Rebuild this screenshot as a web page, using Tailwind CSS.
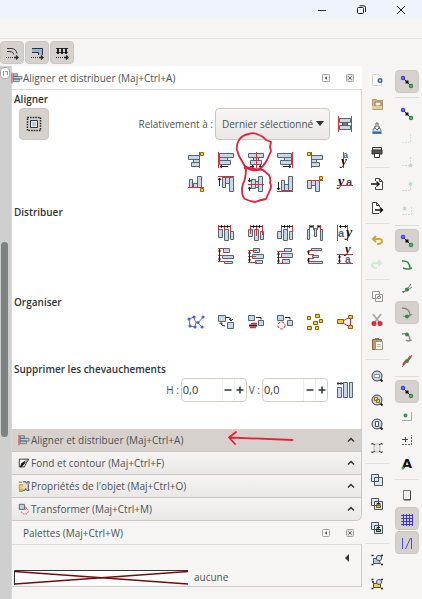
<!DOCTYPE html>
<html lang="fr">
<head>
    <meta charset="UTF-8">
    <meta name="viewport" content="width=device-width, initial-scale=1.0">
    <title>Aligner et distribuer</title>
    <script src="https://cdn.jsdelivr.net/npm/@tailwindcss/browser@4"></script>
</head>
<body class="relative min-h-screen flex flex-col overflow-hidden bg-[#f6f5f3] text-[#4c5357] text-[10px] leading-4 font-['Open_Sans','Noto_Sans',sans-serif]">

    <!-- Shared icons -->
    <svg class="hidden">
        <symbol id="align-left" viewBox="0 0 18 18">
            <path d="M1.500 1v16" stroke="#e02b35" stroke-width="1.500"/>
            <path d="M3.500 2.500h6v4h-6zM3.500 6.500h13v4h-13zM3.500 10.500h9v4h-9z"/>
        </symbol>
        <symbol id="snap" viewBox="0 0 18 18">
            <path d="M5 5l8 8" stroke="#333" fill="none"/>
            <path d="M7.500 7.500h3v3h-3z" fill="#111" stroke="none"/>
            <circle cx="5" cy="5" r="1.500" fill="#a9a9ff" stroke="#3a3aef" stroke-width="1.400"/>
            <circle cx="13" cy="13" r="1.500" fill="#a8dcb2" stroke="#2d8540" stroke-width="1.400"/>
        </symbol>
        <symbol id="dock" viewBox="0 0 8 8">
            <rect x=".5" y=".5" width="7" height="7" rx="1" fill="#f7f7f6" stroke="#a3a3a1"/>
            <path d="M5 2.300v3.400L2.500 4z" fill="#555"/>
        </symbol>
        <symbol id="close" viewBox="0 0 8 8">
            <rect x=".5" y=".5" width="7" height="7" rx="1" fill="#e3e3e1" stroke="#a3a3a1"/>
            <path d="M2.300 2.300l3.400 3.400M5.700 2.300L2.300 5.700" stroke="#666"/>
        </symbol>
        <symbol id="up" viewBox="0 0 8 6">
            <path d="M1 4.500l3-3 3 3" fill="none" stroke="#30363a" stroke-width="1.500"/>
        </symbol>
        <symbol id="lens" viewBox="0 0 18 18">
            <path d="M12 12l2.500 2.500" stroke="#222" stroke-width="2"/>
            <circle cx="9" cy="9" r="5" fill="#c9d9e4" stroke="#39424a"/>
        </symbol>
    </svg>

    <!-- Window bar -->
    <header class="h-[19px] flex justify-end items-center bg-[#eff3fb]">
        <button aria-label="Réduire" class="w-10 h-full flex items-center justify-center"><svg class="w-3 h-3" viewBox="0 0 12 12"><path d="M2 6.500h8" stroke="#333"/></svg></button>
        <button aria-label="Restaurer" class="w-10 h-full flex items-center justify-center"><svg class="w-3 h-3" viewBox="0 0 12 12" fill="none" stroke="#222"><rect x="1.500" y="3.500" width="6" height="6" rx="1"/><path d="M3.500 1.800H8q1.500 0 1.500 1.500V8"/></svg></button>
        <button aria-label="Fermer" class="w-[38px] mr-0.5 h-full flex items-center justify-center"><svg class="w-3 h-3" viewBox="0 0 12 12" stroke="#222"><path d="M2 2l8 8M10 2l-8 8"/></svg></button>
    </header>
    <div class="h-5 border-b border-[#e6e4e2]"></div>

    <!-- Toolbar -->
    <div class="h-[27px] flex gap-px items-center">
        <button aria-label="Épaisseur du contour" class="w-6 h-[23px] rounded-sm bg-[#d6d1cd] border border-[#cdc7c2] flex items-center justify-center">
            <svg class="w-[18px] h-[18px] shrink-0" viewBox="0 0 18 18" fill="none" stroke="#333"><path d="M4 4.500h4q5 0 6 5M4 7.500h3q3 0 4 3"/><path d="M3 13.500h8" stroke-dasharray="1 1"/><path d="M11 13.500h4M13 11.500l2 2-2 2" stroke-width="1.400"/></svg>
        </button>
        <button aria-label="Rayons des coins" class="w-6 h-[23px] rounded-sm bg-[#d6d1cd] border border-[#cdc7c2] flex items-center justify-center">
            <svg class="w-[18px] h-[18px] shrink-0" viewBox="0 0 18 18" fill="none" stroke="#333"><path d="M4 5h10v6h-3V8H4z" fill="#8db7df" stroke="none"/><path d="M4 4.500h10.500V11M4 8.500h6.500V11"/><path d="M3 13.500h8" stroke-dasharray="1 1"/><path d="M11 13.500h4M13 11.500l2 2-2 2" stroke-width="1.400"/></svg>
        </button>
        <button aria-label="Motifs" class="w-6 h-[23px] rounded-sm bg-[#d6d1cd] border border-[#cdc7c2] flex items-center justify-center">
            <svg class="w-[18px] h-[18px] shrink-0" viewBox="0 0 18 18" fill="none" stroke="#222"><path d="M3 4.500h12M3 8.500h12" stroke="#333"/><path d="M5 4v6M9 4v6M13 4v6" stroke-width="2"/><path d="M3 13.500h8" stroke-dasharray="1 1"/><path d="M11 13.500h4M13 11.500l2 2-2 2" stroke-width="1.400"/></svg>
        </button>
    </div>

    <main class="flex-1 flex">
        <!-- Canvas scrollbar -->
        <div class="w-3 shrink-0 bg-[#cfcfcf] border-r border-[#d9d6d3] flex flex-col">
            <button aria-label="Verrouiller" class="w-[10px] h-3 mt-px rounded-sm bg-white border border-[#aaa] flex items-center justify-center"><svg class="w-[6px] h-[6px]" viewBox="0 0 6 6" fill="none" stroke="#999"><path d="M1.500 1v5M3 1.500h2.500V5"/></svg></button>
            <div class="w-[7px] h-[195px] mt-[163px] ml-px rounded-full bg-[#7e8382]"></div>
        </div>

        <!-- Dialogs -->
        <div class="flex-1 flex flex-col min-w-0">
            <div class="h-6 pr-2 flex items-center bg-white border-b border-[#dcdad8]">
                <svg class="w-3 h-3 -ml-px fill-[#b9cfe3] stroke-[#4b555c]"><use href="#align-left"/></svg>
                <h1 class="flex-1">Aligner et distribuer (Maj+Ctrl+A)</h1>
                <button aria-label="Détacher" class="mr-4"><svg class="w-2 h-2"><use href="#dock"/></svg></button>
                <button aria-label="Fermer le panneau"><svg class="w-2 h-2"><use href="#close"/></svg></button>
            </div>

            <section class="bg-white border-r border-[#dcdad8] pl-0.5 flex flex-col fill-[#c6d8e9] stroke-[#59646c] h-[339px]">
                <h2 class="h-[18px] leading-[18px] font-semibold text-[#2e3436] stroke-none">Aligner</h2>
                <div class="flex items-center h-8 pl-[5px] pr-[7px]">
                    <button aria-label="Sélection comme groupe" class="w-[30px] h-8 rounded-sm bg-[#d6d1cd] border border-[#cdc7c2] flex items-center justify-center">
                        <svg class="w-[18px] h-[18px]" viewBox="0 0 18 18"><path d="M2.500 2.500h13v13h-13z" fill="none" stroke="#222" stroke-width="1.500" stroke-dasharray="1.500 1.100"/><path d="M5.500 5.500h7v7h-7z" fill="#eee" stroke="#333"/><path d="M7 7h4v4H7z" fill="#a9cbea" stroke="none"/></svg>
                    </button>
                    <label for="relative" class="ml-auto mr-0.5 stroke-none">Relativement à :</label>
                    <div class="relative w-[115px] h-8">
                        <select id="relative" class="appearance-none w-full h-full pl-1.5 rounded-sm border border-[#cdc7c2] bg-linear-to-b from-[#f7f6f5] to-[#ebe9e7]"><option>Dernier sélectionné</option></select>
                        <svg class="absolute right-1.5 top-[13px] w-2 h-[6px] fill-[#2e3436] stroke-none pointer-events-none" viewBox="0 0 8 6"><path d="M0 0h8L4 5z"/></svg>
                    </div>
                    <button aria-label="Déplacer en groupe" class="ml-1.5"><svg class="w-[18px] h-[18px]" viewBox="0 0 18 18"><path d="M3.500 3.500h11v4h-11zM6.500 7.500h5v3h-5zM3.500 10.500h11v4h-11z"/><path d="M6 9h6" stroke="#222"/><path d="M2.500 1v16M15.500 1v16" stroke="#e02b35"/></svg></button>
                </div>

                <!-- Align buttons -->
                <div class="mt-2 mr-px ml-auto w-[179px] grid grid-cols-6 auto-rows-[24px] justify-items-center items-center">
                    <button aria-label="Bords droits à gauche"><svg class="w-[18px] h-[18px]" viewBox="0 0 18 18"><path d="M1.500 4.500h11v4h-11zM6.500 8.500h6v3h-6zM4.500 11.500h8v4h-8z"/><path d="M12.500 1v16" stroke="#e02b35"/><path d="M13.500 1.500h3v3h-3z" fill="#ffd320" stroke="#8a6a10"/></svg></button>
                    <button aria-label="Bords gauches"><svg class="w-[18px] h-[18px]" viewBox="0 0 18 18"><path d="M2.500 2.500h14v4h-14zM2.500 6.500h8v3h-8zM2.500 9.500h11v4h-11z"/><path d="M1.500 1v16" stroke="#e02b35"/><path d="M3 15.500h8M5 14l-2 1.500 2 1.500" stroke="#222" fill="none"/></svg></button>
                    <button aria-label="Centrer horizontalement"><svg class="w-[18px] h-[18px]" viewBox="0 0 18 18"><path d="M1.500 2.500h15v4h-15zM6.500 6.500h5v3h-5zM3.500 9.500h11v4h-11z"/><path d="M9.500 1v16" stroke="#e02b35"/><path d="M3 15.500h4M12 15.500h4M5 14l2 1.500L5 17M14 14l-2 1.500 2 1.500" stroke="#222" fill="none"/></svg></button>
                    <button aria-label="Bords droits"><svg class="w-[18px] h-[18px]" viewBox="0 0 18 18"><path d="M1.500 2.500h14v4h-14zM8.500 6.500h7v3h-7zM4.500 9.500h11v4h-11z"/><path d="M16.500 1v16" stroke="#e02b35"/><path d="M7 15.500h8M13 14l2 1.500-2 1.500" stroke="#222" fill="none"/></svg></button>
                    <button aria-label="Bords gauches à droite"><svg class="w-[18px] h-[18px]" viewBox="0 0 18 18"><path d="M5.500 4.500h11v4h-11zM5.500 8.500h5v3h-5zM5.500 11.500h8v4h-8z"/><path d="M5.500 1v16" stroke="#e02b35"/><path d="M1.500 1.500h3v3h-3z" fill="#ffd320" stroke="#8a6a10"/></svg></button>
                    <button aria-label="Ancres de texte verticales"><svg class="w-[18px] h-[18px] stroke-none overflow-visible" viewBox="0 0 18 18"><path d="M7.500 1v16" stroke="#e02b35"/><text x="7" y="7" font-family="Liberation Sans" font-size="9" font-weight="bold" fill="#47647f">a</text><text x="5" y="14" font-family="Liberation Serif" font-size="13" font-weight="bold" font-style="italic" fill="#111">y</text></svg></button>

                    <button aria-label="Bords bas en haut"><svg class="w-[18px] h-[18px]" viewBox="0 0 18 18"><path d="M2.500 4.500h3v8h-3zM6.500 8.500h4v4h-4zM10.500 1.500h4v11h-4z"/><path d="M1 12.500h16" stroke="#e02b35"/><path d="M13.500 13.500h3v3h-3z" fill="#ffd320" stroke="#8a6a10"/></svg></button>
                    <button aria-label="Bords hauts"><svg class="w-[18px] h-[18px]" viewBox="0 0 18 18"><path d="M5.500 2.500h3v10h-3zM8.500 2.500h4v6h-4zM12.500 2.500h4v14h-4z"/><path d="M1 1.500h16" stroke="#e02b35"/><path d="M2.500 3v8M1 5l1.500-2L4 5" stroke="#222" fill="none"/></svg></button>
                    <button aria-label="Centrer verticalement"><svg class="w-[18px] h-[18px]" viewBox="0 0 18 18"><path d="M4.500 4.500h4v9h-4zM8.500 6.500h3v6h-3zM11.500 1.500h4v15h-4z"/><path d="M1 9.500h16" stroke="#e02b35"/><path d="M2.500 3v4M2.500 12v4M1 5l1.500 2L4 5M1 14l1.500-2L4 14" stroke="#222" fill="none"/></svg></button>
                    <button aria-label="Bords bas"><svg class="w-[18px] h-[18px]" viewBox="0 0 18 18"><path d="M5.500 5.500h3v10h-3zM8.500 9.500h4v6h-4zM12.500 1.500h4v14h-4z"/><path d="M1 16.500h16" stroke="#e02b35"/><path d="M2.500 7v8M1 13l1.500 2L4 13" stroke="#222" fill="none"/></svg></button>
                    <button aria-label="Bords hauts en bas"><svg class="w-[18px] h-[18px]" viewBox="0 0 18 18"><path d="M1.500 5.500h4v8h-4zM5.500 5.500h4v5h-4zM9.500 5.500h4v11h-4z"/><path d="M1 5.500h16" stroke="#e02b35"/><path d="M13.500 1.500h3v3h-3z" fill="#ffd320" stroke="#8a6a10"/></svg></button>
                    <button aria-label="Ancres de texte horizontales"><svg class="w-[18px] h-[18px] stroke-none overflow-visible" viewBox="0 0 18 18"><text x="2" y="11" font-family="Liberation Serif" font-size="14" font-weight="bold" font-style="italic" fill="#111">y</text><text x="10" y="11" font-family="Liberation Sans" font-size="11" font-weight="bold" fill="#34495c">a</text><path d="M1 10.500h16" stroke="#e02b35"/></svg></button>
                </div>

                <h2 class="mt-[7px] h-[18px] leading-[18px] font-semibold text-[#2e3436] stroke-none">Distribuer</h2>
                <div class="mr-px ml-auto w-[149px] grid grid-cols-5 auto-rows-[23px] justify-items-center items-center">
                    <button aria-label="Distribuer bords gauches"><svg class="w-[18px] h-[18px]" viewBox="0 0 18 18"><path d="M1.500 5.500h4v8h-4zM7.500 5.500h4v11h-4zM13.500 7.500h3v8h-3z"/><path d="M1.500 1v5M7.500 1v5M13.500 1v7" stroke="#e02b35"/><path d="M2 2.500h11M4.500 1v3M10.500 1v3" stroke="#222"/></svg></button>
                    <button aria-label="Distribuer centres horizontaux"><svg class="w-[18px] h-[18px]" viewBox="0 0 18 18"><path d="M1.500 5.500h4v7h-4zM7.500 5.500h4v11h-4zM13.500 7.500h3v8h-3z"/><path d="M3.500 1v9M9.500 1v11M15.500 1v10" stroke="#e02b35"/><path d="M4 2.500h11M6.500 1v3M12.500 1v3" stroke="#222"/></svg></button>
                    <button aria-label="Distribuer bords droits"><svg class="w-[18px] h-[18px]" viewBox="0 0 18 18"><path d="M1.500 7.500h4v7h-4zM7.500 5.500h4v11h-4zM13.500 7.500h3v8h-3z"/><path d="M5.500 1v7M11.500 1v5M16.500 1v7" stroke="#e02b35"/><path d="M6 2.500h10M8.500 1v3M13.500 1v3" stroke="#222"/></svg></button>
                    <button aria-label="Espaces horizontaux égaux"><svg class="w-[18px] h-[18px]" viewBox="0 0 18 18"><path d="M1.500 5.500h2v10h-2zM8.500 4.500h2v8h-2zM14.500 5.500h2v11h-2z"/><path d="M3.500 1v5M7.500 1v5M11.500 1v5M14.500 1v5" stroke="#e02b35"/><path d="M4 2.500h3M12 2.500h2" stroke="#222" stroke-width="2"/></svg></button>
                    <button aria-label="Distribuer ancres horizontales"><svg class="w-[18px] h-[18px] stroke-none overflow-visible" viewBox="0 0 18 18"><path d="M1.500 1v16M11.500 1v16" stroke="#e02b35"/><path d="M3 2.500h8M4.500 1v3M9.500 1v3" stroke="#222"/><text x="2" y="13" font-family="Liberation Sans" font-size="11" font-weight="bold" fill="#47647f">a</text><text x="10" y="13" font-family="Liberation Serif" font-size="14" font-weight="bold" font-style="italic" fill="#111">y</text></svg></button>

                    <button aria-label="Distribuer bords hauts"><svg class="w-[18px] h-[18px]" viewBox="0 0 18 18"><path d="M6.500 1.500h6v4h-6zM5.500 8.500h11v3h-11zM7.500 14.500h8v2h-8z"/><path d="M1 1.500h8M1 8.500h7M1 14.500h7" stroke="#e02b35"/><path d="M2.500 2v12M1 4h3M1 12h3" stroke="#222"/></svg></button>
                    <button aria-label="Distribuer centres verticaux"><svg class="w-[18px] h-[18px]" viewBox="0 0 18 18"><path d="M6.500 1.500h6v4h-6zM5.500 7.500h11v4h-11zM8.500 13.500h7v3h-7z"/><path d="M1 3.500h9M1 9.500h8M1 15.500h9" stroke="#e02b35"/><path d="M2.500 4v11M1 6h3M1 13h3" stroke="#222"/></svg></button>
                    <button aria-label="Distribuer bords bas"><svg class="w-[18px] h-[18px]" viewBox="0 0 18 18"><path d="M8.500 1.500h7v3h-7zM5.500 6.500h11v4h-11zM6.500 12.500h7v4h-7z"/><path d="M1 4.500h9M1 10.500h8M1 16.500h8" stroke="#e02b35"/><path d="M2.500 5v11M1 7h3M1 14h3" stroke="#222"/></svg></button>
                    <button aria-label="Espaces verticaux égaux"><svg class="w-[18px] h-[18px]" viewBox="0 0 18 18"><path d="M5.500 1.500h10v2h-10zM6.500 8.500h6v2h-6zM2.500 14.500h14v2h-14z"/><path d="M2 3.500h7M2 7.500h6M2 11.500h6M2 14.500h6" stroke="#e02b35"/><path d="M2.500 4v3M2.500 11v4M1 5h3M1 13h3" stroke="#222"/></svg></button>
                    <button aria-label="Distribuer ancres verticales"><svg class="w-[18px] h-[18px] stroke-none overflow-visible" viewBox="0 0 18 18"><path d="M1 7.500h16M1 16.500h16" stroke="#e02b35"/><path d="M3.500 8v8M2 10h3M2 14h3" stroke="#222"/><text x="9" y="16" font-family="Liberation Sans" font-size="10" font-weight="bold" fill="#47647f">a</text><text x="9" y="6" font-family="Liberation Serif" font-size="13" font-weight="bold" font-style="italic" fill="#111">y</text></svg></button>
                </div>

                <h2 class="mt-[25px] h-[18px] leading-5 font-semibold text-[#2e3436] stroke-none">Organiser</h2>
                <div class="mr-px ml-auto w-[179px] h-6 grid grid-cols-6 justify-items-center items-center">
                    <button aria-label="Réseau de connecteurs"><svg class="w-[18px] h-[18px]" viewBox="0 0 18 18"><path d="M2 6l5-2 1 4 3 2 5-6M2 6l1 7 5 1 1-5M11 10l4 4" fill="none" stroke="#5c6cf0"/><path d="M2 6h.1M7 4h.1M3 13h.1M8 14h.1M11 9.500h.1M16 4h.1M15 14h.1" stroke="#4a5bec" stroke-width="3" stroke-linecap="round"/></svg></button>
                    <button aria-label="Échanger, ordre de sélection"><svg class="w-[18px] h-[18px]" viewBox="0 0 18 18"><path d="M1.500 2.500h7v6h-7zM10.500 9.500h6v6h-6z"/><path d="M9 4.500h3q2 0 2 3M4 10q0 3 4 3M12 6l2 2 2-2M2.500 11L4 9.500 5.500 11" fill="none" stroke="#222"/></svg></button>
                    <button aria-label="Échanger, ordre de superposition"><svg class="w-[18px] h-[18px]" viewBox="0 0 18 18"><path d="M1.500 2.500h6v5h-6zM11.500 7.500h5v5h-5z"/><path d="M9 4.500h5v2" fill="none" stroke="#222"/><path d="M2 12.500h8" stroke="#222" stroke-width="2"/><path d="M4 10.500h6M3 14.500h6" stroke="#df2630" stroke-width="1.500"/></svg></button>
                    <button aria-label="Échanger par rotation"><svg class="w-[18px] h-[18px]" viewBox="0 0 18 18"><path d="M1.500 2.500h6v5h-6zM11.500 7.500h5v5h-5z"/><path d="M9 4.500h5v2" fill="none" stroke="#222"/><circle cx="5.500" cy="12.500" r="3.500" fill="none" stroke="#e02b35" stroke-dasharray="3 1"/></svg></button>
                    <button aria-label="Disposer aléatoirement"><svg class="w-[18px] h-[18px]" viewBox="0 0 18 18" fill="#f7cb35" stroke="#7d6218"><path d="M1.500 3.500h3v3h-3zM9.500 1.500h4v3h-4zM13.500 6.500h3v3h-3zM7.500 8.500h4v3h-4zM1.500 13.500h4v3h-4zM9.500 13.500h3v3h-3z"/></svg></button>
                    <button aria-label="Défaire les grappes"><svg class="w-[18px] h-[18px]" viewBox="0 0 18 18" fill="#f7cb35" stroke="#7d6218"><path d="M7 8l7-4M7 10l7 4M14.500 5v8" stroke="#e02b35"/><path d="M1.500 6.500h6v4h-6zM12.500 2.500h4v3h-4zM12.500 12.500h4v3h-4z"/></svg></button>
                </div>

                <h2 class="mt-[26px] h-[18px] leading-[18px] font-semibold text-[#2e3436] stroke-none">Supprimer les chevauchements</h2>
                <div class="h-6 pr-[7px] flex items-center justify-end">
                    <label for="gap-h" class="mr-0.5 stroke-none">H :</label>
                    <div class="w-[66px] h-6 flex items-center border border-[#d3cec9] rounded-sm text-[#2e3436]">
                        <input id="gap-h" type="text" value="0,0" class="flex-1 min-w-0 pl-px text-[11px]">
                        <button aria-label="Diminuer H" class="w-3 h-full border-l border-[#eee] flex items-center justify-center"><svg class="w-2 h-2 stroke-[#2e3436]" viewBox="0 0 8 8"><path d="M.5 4h7" stroke-width="1.500"/></svg></button>
                        <button aria-label="Augmenter H" class="w-3 h-full border-l border-[#eee] flex items-center justify-center"><svg class="w-2 h-2 stroke-[#2e3436]" viewBox="0 0 8 8"><path d="M.5 4h7M4 .5v7" stroke-width="1.500"/></svg></button>
                    </div>
                    <label for="gap-v" class="ml-0.5 mr-0.5 stroke-none">V :</label>
                    <div class="w-[66px] h-6 flex items-center border border-[#d3cec9] rounded-sm text-[#2e3436]">
                        <input id="gap-v" type="text" value="0,0" class="flex-1 min-w-0 pl-px text-[11px]">
                        <button aria-label="Diminuer V" class="w-3 h-full border-l border-[#eee] flex items-center justify-center"><svg class="w-2 h-2 stroke-[#2e3436]" viewBox="0 0 8 8"><path d="M.5 4h7" stroke-width="1.500"/></svg></button>
                        <button aria-label="Augmenter V" class="w-3 h-full border-l border-[#eee] flex items-center justify-center"><svg class="w-2 h-2 stroke-[#2e3436]" viewBox="0 0 8 8"><path d="M.5 4h7M4 .5v7" stroke-width="1.500"/></svg></button>
                    </div>
                    <button aria-label="Supprimer les chevauchements" class="ml-2"><svg class="w-[18px] h-[18px]" viewBox="0 0 18 18"><path d="M1.500 6.500h4v10h-4zM7.500 1.500h4v15h-4zM13.500 1.500h3v15h-3z"/><path d="M1 2.500h6M2 1v3M5 1v3" stroke="#333"/></svg></button>
                </div>
            </section>

            <!-- Collapsed dialogs -->
            <nav class="flex flex-col border-r border-b border-[#cfc8c2] rounded-br-md">
                <button class="h-[23px] pl-1.5 pr-1.5 flex items-center text-left bg-[#d6d1cd] border-b border-[#cbc3bd]">
                    <svg class="w-3 h-3 mr-px fill-[#b9cfe3] stroke-[#4b555c]"><use href="#align-left"/></svg>
                    <span class="flex-1">Aligner et distribuer (Maj+Ctrl+A)</span>
                    <svg class="w-2 h-[6px]"><use href="#up"/></svg>
                </button>
                <button class="h-[23px] pl-1.5 pr-1.5 flex items-center text-left bg-linear-to-b from-[#f6f5f4] to-[#eae8e6] border-b border-[#cbc3bd]">
                    <svg class="w-3 h-3 mr-px" viewBox="0 0 14 14"><path d="M1.500 2.500h11l-3 5-2 4h-6z" fill="#fff" stroke="#222"/><path d="M2 12l2-5 8-5-4 6-4 4z" fill="#222"/><path d="M8 4l3-1-3 4z" fill="#e8ce8a"/></svg>
                    <span class="flex-1">Fond et contour (Maj+Ctrl+F)</span>
                    <svg class="w-2 h-[6px]"><use href="#up"/></svg>
                </button>
                <button class="h-[23px] pl-1.5 pr-1.5 flex items-center text-left bg-linear-to-b from-[#f6f5f4] to-[#eae8e6] border-b border-[#cbc3bd]">
                    <svg class="w-3 h-3 mr-px" viewBox="0 0 14 14"><path d="M1.500 5.500h6v6h-6z" fill="#f8d04a" stroke="#b88f20"/><path d="M6 2h3l1 2 1-2h2v2l-1 1v5l1 2h-3l-1-2-1 2H6" fill="#ddd" stroke="#333"/><path d="M1 2.500h4M1 13h5" stroke="#555"/></svg>
                    <span class="flex-1">Propriétés de l'objet (Maj+Ctrl+O)</span>
                    <svg class="w-2 h-[6px]"><use href="#up"/></svg>
                </button>
                <button class="h-[22px] pl-1.5 pr-1.5 flex items-center text-left bg-linear-to-b from-[#f6f5f4] to-[#eae8e6] rounded-br-md">
                    <svg class="w-3 h-3 mr-px" viewBox="0 0 14 14"><path d="M1.500 1.500h6v6h-6z" fill="#bcd0e2" stroke="#4b555c"/><path d="M4 10q1 3 4 3t4-3q0-3-3-4" fill="none" stroke="#e02b35" stroke-dasharray="2 1"/><path d="M8 4l2 2-2 2" fill="none" stroke="#e02b35"/></svg>
                    <span class="flex-1">Transformer (Maj+Ctrl+M)</span>
                    <svg class="w-2 h-[6px]"><use href="#up"/></svg>
                </button>
            </nav>

            <!-- Palettes -->
            <div class="h-6 pl-[11px] pr-2 flex items-center border-b border-[#dcdad8]">
                <h1 class="flex-1">Palettes (Maj+Ctrl+W)</h1>
                <button aria-label="Détacher" class="mr-4"><svg class="w-2 h-2"><use href="#dock"/></svg></button>
                <button aria-label="Fermer le panneau"><svg class="w-2 h-2"><use href="#close"/></svg></button>
            </div>
            <div class="h-[42px] flex flex-col justify-between border-r border-b border-[#cfccc9]">
                <button aria-label="Options des palettes" class="self-end mt-2 mr-[11px]"><svg class="w-[6px] h-[10px]" viewBox="0 0 6 10"><path d="M5 1v8L1 5z" fill="#2e3436"/></svg></button>
                <div class="h-[18px] pl-0.5 flex items-center gap-1.5">
                    <svg class="w-[174px] h-[15px]" viewBox="0 0 174 15"><path d="M0 0h174v15H0z" fill="#fff"/><path d="M.5 15V.5H174" fill="none" stroke="#333"/><path d="M1 1.500l173 12.500M1 14L174 1.500" stroke="#760a0a" stroke-width="1.600"/></svg>
                    <span>aucune</span>
                </div>
            </div>
        </div>

        <!-- Commands bar -->
        <div class="w-[30px] shrink-0 pt-0.5 flex flex-col items-center">
            <button aria-label="Nouveau" class="h-6"><svg class="w-[18px] h-[18px]" viewBox="0 0 18 18"><path d="M4.500 3.500h6l3 3v8h-9z" fill="#fff" stroke="#d5d5d3"/><circle cx="12" cy="9.500" r="1.700" fill="#fff" stroke="#3465a4" stroke-width="1.600"/></svg></button>
            <button aria-label="Ouvrir" class="h-6"><svg class="w-[18px] h-[18px]" viewBox="0 0 18 18"><path d="M4.500 4.500h4l1 1h5v9h-10z" fill="#cdb88f" stroke="#b29c70"/><path d="M7 7h6v4H7z" fill="#f4efe3" stroke="#8b7b5a"/><path d="M4 11h10v3H4z" fill="#e3cd9f"/></svg></button>
            <button aria-label="Enregistrer" class="h-6"><svg class="w-[18px] h-[18px]" viewBox="0 0 18 18"><path d="M5.500 9.500h7l1 5h-9z" fill="#d4deea" stroke="#6f8fb8"/><path d="M5 13.500h8" stroke="#2f66ad" stroke-width="2"/><path d="M8 4h2v4h2l-3 3-3-3h2z" fill="#f4f4f4" stroke="#666"/></svg></button>
            <button aria-label="Imprimer" class="h-6"><svg class="w-[18px] h-[18px]" viewBox="0 0 18 18"><path d="M4.500 4.500h9v3h-9z" fill="#ddd" stroke="#333"/><path d="M4 7h10v4H4z" fill="#555" stroke="#333"/><path d="M6.500 10.500h5v4h-5z" fill="#fff" stroke="#333"/></svg></button>
            <hr class="w-6 h-px mt-[3px] mb-1 border-0 bg-[#dfddda]">
            <button aria-label="Importer" class="h-6"><svg class="w-[18px] h-[18px]" viewBox="0 0 18 18"><path d="M7.500 6V3.500h4l3 3v8h-7V12" fill="#fff" stroke="#444"/><path d="M3 9h8M8.500 6.500L11 9l-2.500 2.500" fill="none" stroke="#111" stroke-width="1.400"/><path d="M11.500 3.500v3h3" fill="none" stroke="#444"/></svg></button>
            <button aria-label="Exporter" class="h-6"><svg class="w-[18px] h-[18px]" viewBox="0 0 18 18"><path d="M11 14.500H4.500v-11h4l3 3V8" fill="#fff" stroke="#444"/><path d="M7 11h7M12 8.500l2.500 2.500-2.500 2.500" fill="none" stroke="#111" stroke-width="1.400"/><path d="M8.500 3.500v3h3" fill="none" stroke="#444"/></svg></button>
            <hr class="w-6 h-px mt-[3px] mb-1 border-0 bg-[#dfddda]">
            <button aria-label="Annuler" class="h-6"><svg class="w-[18px] h-[18px]" viewBox="0 0 18 18" fill="none" stroke="#cfa92f" stroke-width="2"><path d="M8 5L5 8l3 3M5 8h6q3 0 3 2t-3 3h-2"/></svg></button>
            <button aria-label="Rétablir" class="h-6"><svg class="w-[18px] h-[18px]" viewBox="0 0 18 18" fill="none" stroke="#d3e8d0" stroke-width="2"><path d="M10 5l3 3-3 3M13 8H7q-3 0-3 2t3 3h2"/></svg></button>
            <hr class="w-6 h-px mt-[3px] mb-1 border-0 bg-[#dfddda]">
            <button aria-label="Copier" class="h-6"><svg class="w-[18px] h-[18px]" viewBox="0 0 18 18" fill="#fff" stroke="#999"><path d="M4.500 4.500h7v7h-7zM7.500 7.500h7v7h-7z"/><path d="M9.500 9.500h3v2h-3z"/></svg></button>
            <button aria-label="Couper" class="h-6"><svg class="w-[18px] h-[18px]" viewBox="0 0 18 18"><path d="M5 3l6 8M13 3l-6 8" stroke="#aaa" stroke-width="1.800"/><circle cx="6" cy="12.500" r="1.500" fill="#e55" stroke="#d02a32" stroke-width="2"/><circle cx="12" cy="12.500" r="1.500" fill="#e55" stroke="#d02a32" stroke-width="2"/></svg></button>
            <button aria-label="Coller" class="h-6"><svg class="w-[18px] h-[18px]" viewBox="0 0 18 18"><path d="M4.500 4.500h9v10h-9z" fill="#c39753" stroke="#94682a"/><path d="M7.500 6.500h7v8h-7z" fill="#f8f8f6" stroke="#999"/><path d="M7 4h4" stroke="#777" stroke-width="2"/><path d="M9 9.500h4M9 11.500h4" stroke="#bbb"/></svg></button>
            <hr class="w-6 h-px mt-[3px] mb-1 border-0 bg-[#dfddda]">
            <button aria-label="Zoom sélection" class="h-6"><svg class="w-[18px] h-[18px]" viewBox="0 0 18 18"><use href="#lens"/><path d="M6.500 7.500h5v3h-5z" fill="#fff" stroke="#889"/></svg></button>
            <button aria-label="Zoom dessin" class="h-6"><svg class="w-[18px] h-[18px]" viewBox="0 0 18 18"><use href="#lens"/><path d="M6.500 6.500h3v3h-3zM8.500 8.500h3v3h-3z" fill="#f5d36b" stroke="#8c6d1c"/></svg></button>
            <button aria-label="Zoom page" class="h-6"><svg class="w-[18px] h-[18px]" viewBox="0 0 18 18"><use href="#lens"/><path d="M7.500 6.500h3v5h-3z" fill="#fff" stroke="#556"/></svg></button>
            <button aria-label="Centrer la page" class="h-6"><svg class="w-[18px] h-[18px]" viewBox="0 0 18 18"><path d="M6 5h6v8H6z" fill="#e8e8e6" stroke="#bbb"/><path d="M4 4l3 2M14 4l-3 2M4 14l3-2M14 14l-3-2M4 4v2M14 4v2M4 14v-2M14 14v-2" stroke="#444"/></svg></button>
            <hr class="w-6 h-px mt-[3px] mb-1 border-0 bg-[#dfddda]">
            <button aria-label="Dupliquer" class="h-6"><svg class="w-[18px] h-[18px]" viewBox="0 0 18 18" fill="#dbe8f4" stroke="#4b555c"><path d="M3.500 3.500h7v7h-7zM6.500 6.500h8v8h-8z"/></svg></button>
            <button aria-label="Cloner" class="h-6"><svg class="w-[18px] h-[18px]" viewBox="0 0 18 18" fill="#dbe8f4" stroke="#4b555c"><path d="M3.500 3.500h7v7h-7zM6.500 6.500h8v8h-8z"/><path d="M9 10V8.500h3V10" fill="none" stroke="#222"/><path d="M8.500 10.500h4v2h-4z" fill="#f4bd27" stroke="#7b5c10"/></svg></button>
            <button aria-label="Délier le clone" class="h-6"><svg class="w-[18px] h-[18px]" viewBox="0 0 18 18" fill="#dbe8f4" stroke="#4b555c"><path d="M3.500 3.500h7v7h-7zM6.500 6.500h8v8h-8z"/><path d="M9 10V8.500h3" fill="none" stroke="#222"/><path d="M8.500 10.500h4v2h-4z" fill="#9ad04a" stroke="#222"/></svg></button>
            <hr class="w-6 h-px mt-[3px] mb-1 border-0 bg-[#dfddda]">
            <button aria-label="Grouper" class="h-6"><svg class="w-[18px] h-[18px]" viewBox="0 0 18 18"><path d="M5.500 7.500h5l2 5h-7z" fill="#b3c8dc" stroke="#4b555c"/><circle cx="11" cy="7" r="2.700" fill="#cfdeeb" stroke="#4b555c"/><path d="M3.500 4.500h2M13 4.500h2M3.500 13.500h2M13 13.500h2" stroke="#222" stroke-width="1.500"/></svg></button>
            <button aria-label="Dégrouper" class="h-6"><svg class="w-[18px] h-[18px]" viewBox="0 0 18 18"><path d="M5.500 8.500h7v4h-7z" fill="#f3cb58" stroke="#5a4a20"/><circle cx="11" cy="7" r="2.500" fill="#cfdeeb" stroke="#4b555c"/><path d="M3.500 4.500h2M13 4.500h2M3.500 13.500h2M13 13.500h2M4 7h2" stroke="#222" stroke-width="1.500"/></svg></button>
        </div>

        <!-- Snap bar -->
        <div class="w-[30px] shrink-0 pt-1 flex flex-col items-center">
            <button aria-label="Magnétisme" class="w-6 h-[23px] mb-px shrink-0 rounded-sm bg-[#d6d1cd] border border-[#cdc7c2] flex items-center justify-center"><svg class="w-[18px] h-[18px] shrink-0"><use href="#snap"/></svg></button>
            <hr class="w-6 h-px mt-[3px] mb-1 border-0 bg-[#dfddda]">
            <button aria-label="Boîtes englobantes" class="h-6"><svg class="w-[18px] h-[18px]"><use href="#snap"/></svg></button>
            <button aria-label="Bords de boîte" class="h-6"><svg class="w-[18px] h-[18px]" viewBox="0 0 18 18" fill="none" stroke="#d0e4d8"><path d="M4 13.500h8.500V4" stroke-dasharray="2 1"/></svg></button>
            <button aria-label="Coins de boîte" class="h-6"><svg class="w-[18px] h-[18px]" viewBox="0 0 18 18" fill="none" stroke="#d2d8d4"><path d="M4 12.500h8.500V4" stroke-dasharray="2 1"/><circle cx="12.500" cy="12.500" r="1" stroke="#c0dcc8" stroke-width="2"/></svg></button>
            <button aria-label="Milieux des bords" class="h-6"><svg class="w-[18px] h-[18px]" viewBox="0 0 18 18" fill="none" stroke="#d2d8d4"><path d="M4 13.500h8.500V4" stroke-dasharray="2 1"/><circle cx="12.500" cy="7" r="1" stroke="#c0dcc8" stroke-width="2"/></svg></button>
            <button aria-label="Centres de boîte" class="h-6"><svg class="w-[18px] h-[18px]" viewBox="0 0 18 18" fill="none" stroke="#d2d8d4"><path d="M4 13.500h9.500V5" stroke-dasharray="2 1"/><circle cx="6.500" cy="7.500" r="1" stroke="#c0dcc8" stroke-width="2"/></svg></button>
            <hr class="w-6 h-px my-[3px] border-0 bg-[#dfddda]">
            <button aria-label="Nœuds" class="w-6 h-[23px] mb-px shrink-0 rounded-sm bg-[#d6d1cd] border border-[#cdc7c2] flex items-center justify-center"><svg class="w-[18px] h-[18px] shrink-0"><use href="#snap"/></svg></button>
            <button aria-label="Chemins" class="h-6"><svg class="w-[18px] h-[18px]" viewBox="0 0 18 18" fill="none" stroke="#2f8b45" stroke-width="1.500"><path d="M4 5q8-1 8 8M5 12q5 2 9 0"/></svg></button>
            <button aria-label="Intersections" class="h-6"><svg class="w-[18px] h-[18px]" viewBox="0 0 18 18" fill="none" stroke="#777"><path d="M4 12q6-1 10-5M5 13q4-3 8-9"/><circle cx="9" cy="9.500" r="1" stroke="#2f8b45" stroke-width="2"/></svg></button>
            <button aria-label="Points de rebroussement" class="w-6 h-[23px] mb-px shrink-0 rounded-sm bg-[#d6d1cd] border border-[#cdc7c2] flex items-center justify-center"><svg class="w-[18px] h-[18px] shrink-0" viewBox="0 0 18 18" fill="none" stroke="#888" stroke-width="1.300"><path d="M4 4q8 0 8 8M5 12q5 2 9-2"/><circle cx="9" cy="12.500" r="1" stroke="#2f8b45" stroke-width="2"/></svg></button>
            <button aria-label="Points doux" class="h-6"><svg class="w-[18px] h-[18px]" viewBox="0 0 18 18" fill="none" stroke="#888" stroke-width="1.300"><path d="M4 6q8-2 8 7M8 12q2 2 6 0"/><circle cx="9" cy="6.500" r="1" stroke="#2f8b45" stroke-width="2"/></svg></button>
            <button aria-label="Milieux de segments" class="h-6"><svg class="w-[18px] h-[18px]" viewBox="0 0 18 18" fill="none"><path d="M5 13l3-4M10 8l3-4" stroke="#d04048" stroke-width="2.500"/><path d="M4 15l10-12" stroke="#777"/><circle cx="9" cy="9" r="1" stroke="#2f8b45" stroke-width="2"/></svg></button>
            <hr class="w-6 h-px my-[3px] border-0 bg-[#dfddda]">
            <button aria-label="Autres points" class="w-6 h-[23px] mb-px shrink-0 rounded-sm bg-[#d6d1cd] border border-[#cdc7c2] flex items-center justify-center"><svg class="w-[18px] h-[18px] shrink-0"><use href="#snap"/></svg></button>
            <button aria-label="Centres d'objets" class="h-6"><svg class="w-[18px] h-[18px]" viewBox="0 0 18 18" fill="none" stroke="#aaa"><path d="M4 13.500h9.500V5"/><circle cx="7.500" cy="8.500" r="1" stroke="#2f9b45" stroke-width="2"/></svg></button>
            <button aria-label="Centres de rotation" class="h-6"><svg class="w-[18px] h-[18px]" viewBox="0 0 18 18" fill="none" stroke="#666"><path d="M4 13.500h9.500V4" stroke-dasharray="2 1"/><path d="M4 8.500h6M7.500 6v5" stroke="#444"/></svg></button>
            <button aria-label="Lignes de base du texte" class="h-6"><svg class="w-[18px] h-[18px]" viewBox="0 0 18 18"><text x="4" y="13" font-family="DejaVu Sans" font-size="13" font-weight="bold" fill="#111">A</text><circle cx="5" cy="13" r="1.500" fill="#3aa552"/></svg></button>
            <hr class="w-6 h-px my-[3px] border-0 bg-[#dfddda]">
            <button aria-label="Bord de page" class="h-6"><svg class="w-[18px] h-[18px]" viewBox="0 0 18 18"><path d="M5.500 4.500h7v9h-7z" fill="#eee" stroke="#777"/><path d="M12.500 5v9H6" fill="none" stroke="#444"/></svg></button>
            <button aria-label="Grilles" class="w-6 h-[23px] mb-px shrink-0 rounded-sm bg-[#d6d1cd] border border-[#cdc7c2] flex items-center justify-center"><svg class="w-[18px] h-[18px] shrink-0" viewBox="0 0 18 18" stroke="#3434f0"><path d="M3 5.500h12M3 8.500h12M3 11.500h12M3 14.500h12M5.500 4v12M8.500 4v12M11.500 4v12M14.500 4v12"/></svg></button>
            <button aria-label="Guides" class="w-6 h-[23px] mb-px shrink-0 rounded-sm bg-[#d6d1cd] border border-[#cdc7c2] flex items-center justify-center"><svg class="w-[18px] h-[18px] shrink-0" viewBox="0 0 18 18" stroke="#4a4aee"><path d="M4.500 4v11M7.500 15l5-11M13.500 4v11"/></svg></button>
        </div>
    </main>

    <!-- Hand-drawn marks -->
    <svg class="absolute top-0 left-0 w-[422px] h-[599px] pointer-events-none" viewBox="0 0 422 599" fill="none" stroke="#e2213a" stroke-width="1.800" stroke-linecap="round" stroke-linejoin="round">
        <path d="M266 140q-3-4-7-5-6-3-10-1-7 1-10 6-3 5-2 10l2 6 4 7q3 6 9 7t9-2q4-4 6-8l4-9-1-4 1-5z"/>
        <path d="M246 169q-2-1-1-2l10 2 8 1 6 5q2 3 1 8 2 3 0 7l-4 9q-6 1-11 3-6-1-10-3-3-2-3-9 0-3 1-6 3-6 3-15z"/>
        <path d="M292.500 440l-63-2.500M236 432l-7 5.500 6 6.500"/>
    </svg>
</body>
</html>
